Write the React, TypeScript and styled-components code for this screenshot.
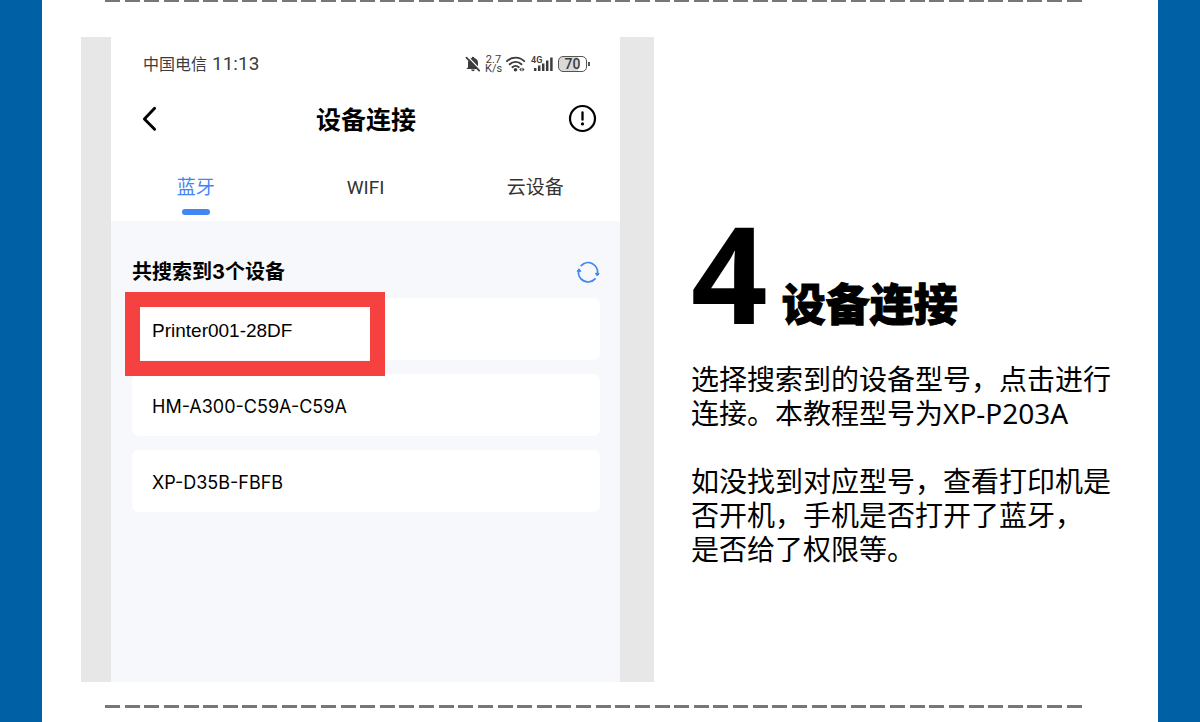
import React from 'react';
import styled, { createGlobalStyle } from 'styled-components';

const GlobalStyle = createGlobalStyle`
  *, *::before, *::after { box-sizing: border-box; }
  body { margin: 0; background: #0060a5; color: #000; }
  body, button { font-family: "Noto Sans", "Noto Sans CJK SC", sans-serif; }
  h1, h2, p, ul { margin: 0; padding: 0; }
  button { border: 0; padding: 0; background: none; color: inherit; cursor: pointer; }
`;

const Page = styled.div`
  min-height: 100vh;
  padding: 0 42px;
  background: #0060a5;
`;

const Sheet = styled.main`
  min-height: 100vh;
  display: flex;
  flex-direction: column;
  background: #fff;
`;

const DashRow = styled.div<{ $height: number }>`
  display: flex;
  justify-content: space-between;
  height: ${(p) => p.$height}px;
  margin: 0 76px 0 63px;
`;

const Dash = styled.span`
  width: 15px;
  background: #777;
`;

const Step = styled.section`
  display: grid;
  grid-template-columns: minmax(0, 573fr) minmax(0, 504fr);
  margin: 35px 0 23px;
  padding-left: 39px;
`;

const Frame = styled.div`
  display: flex;
  padding: 0 34px 0 30px;
  background: #e7e7e7;
`;

const Phone = styled.div`
  flex: 1;
  display: flex;
  flex-direction: column;
  background: #f7f8fc;
`;

const PhoneTop = styled.header`
  background: #fff;
`;

const StatusBar = styled.div`
  display: flex;
  align-items: center;
  justify-content: space-between;
  height: 54px;
  padding: 0 30px 0 32px;
  color: #3c3c3c;
`;

const Carrier = styled.span`
  display: flex;
  align-items: center;
  gap: 5px;
  font-size: 16px;
  line-height: 20px;
`;

const Clock = styled.span`
  font-family: Roboto, sans-serif;
  font-size: 19px;
`;

const Indicators = styled.div`
  display: flex;
  align-items: center;
  gap: 4px;
`;

const Speed = styled.span`
  width: 17px;
  font: 400 11px/9px Roboto, sans-serif;
  text-align: center;
`;

const Battery = styled.span`
  display: flex;
  align-items: center;
  gap: 1px;

  &::after {
    content: "";
    width: 2px;
    height: 4px;
    background: #555;
  }
`;

const BatteryCell = styled.span`
  width: 29px;
  height: 16px;
  border: 1px solid #555;
  border-radius: 5px;
  background: linear-gradient(90deg, #d9d9d9 70%, #fff 70%);
  font: 500 14px/15px Roboto, sans-serif;
  text-align: center;
`;

const NavBar = styled.div`
  display: flex;
  align-items: center;
  justify-content: space-between;
  height: 54px;
  padding: 0 23px 0 24px;
`;

const IconButton = styled.button`
  display: flex;
  align-items: center;
  justify-content: center;
  width: 29px;
  height: 29px;
`;

const NavTitle = styled.h2`
  padding-top: 2px;
  font-size: 25px;
  line-height: 32px;
  font-weight: 700;
`;

const Tabs = styled.div`
  display: grid;
  grid-template-columns: repeat(3, 1fr);
  height: 76px;
  padding-top: 26px;
`;

const Tab = styled.button<{ $active?: boolean }>`
  display: flex;
  flex-direction: column;
  align-items: center;
  gap: 4px;
  font-family: Roboto, "Noto Sans CJK SC", sans-serif;
  font-size: 19px;
  line-height: 34px;
  color: ${(p) => (p.$active ? '#4285f4' : '#333')};

  &::after {
    content: "";
    width: 28px;
    height: 6px;
    border-radius: 3px;
    background: ${(p) => (p.$active ? '#4285f4' : 'transparent')};
  }
`;

const Results = styled.div`
  padding: 37px 20px 170px 21px;
`;

const ResultsHead = styled.div`
  display: flex;
  align-items: center;
  justify-content: space-between;
  height: 28px;
  margin-bottom: 12px;
`;

const ResultsTitle = styled.h2`
  font-family: Inter, "Noto Sans CJK SC", sans-serif;
  font-size: 20px;
  line-height: 28px;
  font-weight: 700;
`;

const RefreshButton = styled(IconButton)`
  width: 24px;
  height: 24px;
`;

const DeviceList = styled.ul`
  display: grid;
  gap: 14px;
  list-style: none;
`;

const DeviceItem = styled.li`
  position: relative;
`;

const Device = styled.button<{ $plain?: boolean }>`
  display: block;
  width: 100%;
  height: 62px;
  padding: 4px 20px 0;
  border-radius: 7px;
  background: #fff;
  font-family: ${(p) => (p.$plain ? '"Liberation Sans"' : 'Inter')}, sans-serif;
  font-size: ${(p) => (p.$plain ? 19 : 18)}px;
  line-height: 28px;
  text-align: left;
`;

const Highlight = styled.span`
  position: absolute;
  z-index: 1;
  top: -6px;
  left: -7px;
  width: 260px;
  height: 84px;
  border: 15px solid #f64141;
  pointer-events: none;
`;

const Guide = styled.div`
  padding: 183px 36px 0 37px;
`;

const GuideHead = styled.div`
  display: flex;
  align-items: flex-end;
  gap: 14px;
  margin-bottom: 38px;
`;

const StepNumber = styled.span`
  font-size: 134px;
  line-height: 104px;
  font-weight: 700;
`;

const GuideTitle = styled.h1`
  font-family: "Noto Sans CJK SC", sans-serif;
  font-size: 44px;
  line-height: 44px;
  font-weight: 900;
  -webkit-text-stroke: 1px #000;
`;

const GuideText = styled.p`
  font-size: 28px;
  line-height: 34px;
  white-space: nowrap;

  & + & { margin-top: 34px; }
`;

const BellOffIcon = () => (
  <svg width="16" height="16" viewBox="0 0 16 16" aria-hidden="true">
    <path d="M3 11.200V6.800a5 5 0 0 1 3.700-4.700 1.300 1.300 0 0 1 2.600 0A5 5 0 0 1 13 6.800v4.400l1.600 1.800H1.400z" fill="#3c3c3c" />
    <path d="M6.200 13.600h3.600a1.800 1.600 0 0 1-3.600 0z" fill="#3c3c3c" />
    <path d="M2.800.800 15.400 13.800" stroke="#fff" strokeWidth="1.300" />
    <path d="M1.400 1.600 14.200 14.600" stroke="#3c3c3c" strokeWidth="1.700" strokeLinecap="round" />
  </svg>
);

const WifiIcon = () => (
  <svg width="21" height="16" viewBox="0 0 21 16" aria-hidden="true">
    <g fill="none" stroke="#3c3c3c" strokeWidth="1.9" strokeLinecap="round">
      <path d="M1 5.2a12.2 12.2 0 0 1 17.2 0" />
      <path d="M3.7 8.3a8.4 8.4 0 0 1 11.8 0" />
      <path d="M6.4 11.2a4.6 4.6 0 0 1 6.4 0" />
    </g>
    <circle cx="9.5" cy="13.8" r="1.8" fill="#3c3c3c" />
    <path d="m13.200 13.600 2.200-2v4zM18.600 13.600l-2.200-2v4z" fill="#3c3c3c" />
  </svg>
);

const SignalIcon = () => (
  <svg width="23" height="16" viewBox="0 0 23 16" aria-label="4G">
    <text x="0" y="7" fontFamily="Roboto, sans-serif" fontSize="9" fontWeight="600" fill="#3c3c3c">4G</text>
    <path d="M4.200 15v-3M8.200 15V9.600M12.200 15V7.600M16.200 15V4.600M20.400 15V1.400" stroke="#3c3c3c" strokeWidth="2.500" />
  </svg>
);

const BackIcon = () => (
  <svg width="29" height="29" viewBox="0 0 29 29" aria-hidden="true">
    <path d="M19.600 4.200 9.400 15l10.200 10.200" fill="none" stroke="#000" strokeWidth="2.900" strokeLinecap="round" strokeLinejoin="round" />
  </svg>
);

const AlertIcon = () => (
  <svg width="29" height="29" viewBox="0 0 29 29" aria-hidden="true">
    <circle cx="14.500" cy="14.500" r="12.500" fill="none" stroke="#000" strokeWidth="2.200" />
    <path d="M14.500 8.500v7.200" stroke="#000" strokeWidth="2.300" strokeLinecap="round" />
    <circle cx="14.500" cy="19.900" r="1.600" fill="#000" />
  </svg>
);

const RefreshIcon = () => (
  <svg width="24" height="24" viewBox="0 0 24 24" aria-hidden="true">
    <g fill="none" stroke="#4285f4" strokeWidth="1.800" strokeLinecap="round">
      <path d="M5.200 5.600a9.500 9.500 0 0 1 16.200 8.400" />
      <path d="M19 18.800a9.500 9.500 0 0 1-16.300-8.300" />
    </g>
    <path d="m3 8.700 1.900 2.600H1.100zM21.300 16l-1.900-2.600h3.800z" fill="#4285f4" stroke="#4285f4" strokeLinejoin="round" />
  </svg>
);

const DashedRule = ({ height }: { height: number }) => (
  <DashRow $height={height} aria-hidden="true">
    {Array.from({ length: 50 }, (_, i) => <Dash key={i} />)}
  </DashRow>
);

export default function App() {
  return (
    <Page>
      <GlobalStyle />
      <Sheet>
        <DashedRule height={2} />
        <Step>
          <Frame>
            <Phone>
              <PhoneTop>
                <StatusBar>
                  <Carrier>中国电信<Clock>11:13</Clock></Carrier>
                  <Indicators>
                    <BellOffIcon />
                    <Speed>2.7 K/s</Speed>
                    <WifiIcon />
                    <SignalIcon />
                    <Battery><BatteryCell>70</BatteryCell></Battery>
                  </Indicators>
                </StatusBar>
                <NavBar>
                  <IconButton aria-label="返回"><BackIcon /></IconButton>
                  <NavTitle>设备连接</NavTitle>
                  <IconButton aria-label="帮助"><AlertIcon /></IconButton>
                </NavBar>
                <Tabs role="tablist">
                  <Tab role="tab" aria-selected="true" $active>蓝牙</Tab>
                  <Tab role="tab" aria-selected="false">WIFI</Tab>
                  <Tab role="tab" aria-selected="false">云设备</Tab>
                </Tabs>
              </PhoneTop>
              <Results>
                <ResultsHead>
                  <ResultsTitle>共搜索到3个设备</ResultsTitle>
                  <RefreshButton aria-label="刷新"><RefreshIcon /></RefreshButton>
                </ResultsHead>
                <DeviceList>
                  <DeviceItem>
                    <Device $plain>Printer001-28DF</Device>
                    <Highlight />
                  </DeviceItem>
                  <DeviceItem><Device>HM-A300-C59A-C59A</Device></DeviceItem>
                  <DeviceItem><Device>XP-D35B-FBFB</Device></DeviceItem>
                </DeviceList>
              </Results>
            </Phone>
          </Frame>
          <Guide>
            <GuideHead>
              <StepNumber>4</StepNumber>
              <GuideTitle>设备连接</GuideTitle>
            </GuideHead>
            <GuideText>
              选择搜索到的设备型号，点击进行<br />
              连接。本教程型号为XP-P203A
            </GuideText>
            <GuideText>
              如没找到对应型号，查看打印机是<br />
              否开机，手机是否打开了蓝牙，<br />
              是否给了权限等。
            </GuideText>
          </Guide>
        </Step>
        <DashedRule height={3} />
      </Sheet>
    </Page>
  );
}
